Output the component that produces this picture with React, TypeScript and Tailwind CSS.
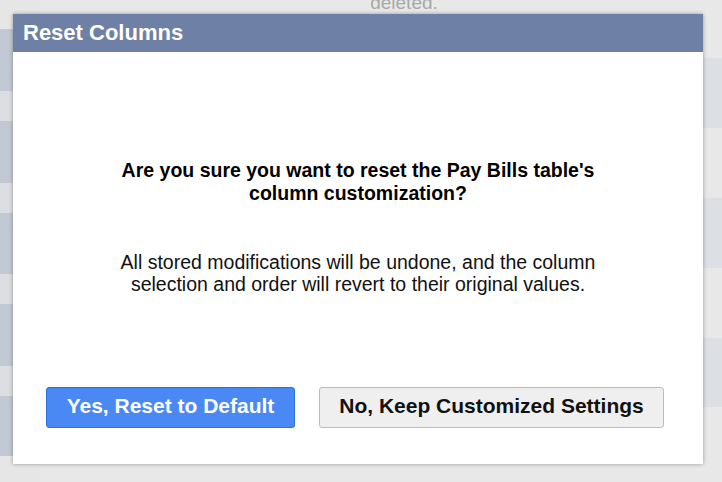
import React from "react";

const leftRows = [
  { h: 29, c: "bg-[#e6e6e6]" },
  { h: 62, c: "bg-[#c3c9d4]" },
  { h: 30, c: "bg-[#dcdee2]" },
  { h: 62, c: "bg-[#c3c9d4]" },
  { h: 30, c: "bg-[#dcdee2]" },
  { h: 61, c: "bg-[#c3c9d4]" },
  { h: 30, c: "bg-[#dcdee2]" },
  { h: 62, c: "bg-[#c3c9d4]" },
  { h: 30, c: "bg-[#dcdee2]" },
  { h: 60, c: "bg-[#c3c9d4]" },
  { h: 26, c: "bg-[#e6e6e6]" },
];

const rightRows = [
  { h: 58, c: "bg-[#e8e8e8]" },
  { h: 70, c: "bg-[#dcdfe4]" },
  { h: 70, c: "bg-[#e8e8e8]" },
  { h: 70, c: "bg-[#dcdfe4]" },
  { h: 70, c: "bg-[#e8e8e8]" },
  { h: 69, c: "bg-[#dcdfe4]" },
  { h: 75, c: "bg-[#e8e8e8]" },
];

export default function App() {
  return (
    <div
      className="relative w-[722px] h-[482px] overflow-hidden bg-[#e8e8e8]"
      style={{ fontFamily: '"Liberation Sans", Arial, sans-serif' }}
    >
      <div className="flex h-full">
        <div className="w-[40px] flex flex-col">
          {leftRows.map((r, i) => (
            <div key={i} className={r.c} style={{ height: r.h }} />
          ))}
        </div>
        <div className="flex-1 flex justify-center">
          <div className="text-[19px] leading-[19px] text-[#a8a8a8] mt-[-7px] ml-[86px] whitespace-nowrap">deleted.</div>
        </div>
        <div className="w-[40px] flex flex-col">
          {rightRows.map((r, i) => (
            <div key={i} className={r.c} style={{ height: r.h }} />
          ))}
        </div>
      </div>

      <div className="absolute left-[13px] top-[14px] w-[690px] h-[450px] bg-white flex flex-col shadow-[0_0_4px_rgba(0,0,0,0.35)]">
        <div className="h-[38px] bg-[#6e80a5] flex items-center px-[10px]">
          <span className="text-white font-bold text-[22px] leading-[24px]">Reset Columns</span>
        </div>
        <div className="flex-1 flex flex-col">
          <div className="mt-[107px] text-center font-bold text-[19.5px] leading-[23px] text-black whitespace-nowrap">
            Are you sure you want to reset the Pay Bills table's
            <br />
            column customization?
          </div>
          <div className="mt-[46px] text-center text-[19.5px] leading-[22px] text-[#111] whitespace-nowrap">
            All stored modifications will be undone, and the column
            <br />
            selection and order will revert to their original values.
          </div>
          <div className="mt-[92px] flex gap-[24px] pl-[33px]">
            <button className="w-[249px] h-[41px] pb-[3px] rounded-[3px] bg-[#4a89f3] border border-[#2f6fd6] text-white font-bold text-[21px] leading-[24px] whitespace-nowrap">
              Yes, Reset to Default
            </button>
            <button className="w-[345px] h-[41px] pb-[3px] rounded-[3px] bg-[#efefef] border border-[#bcbcbc] text-[#111] font-bold text-[21px] leading-[24px] whitespace-nowrap">
              No, Keep Customized Settings
            </button>
          </div>
        </div>
      </div>
    </div>
  );
}
